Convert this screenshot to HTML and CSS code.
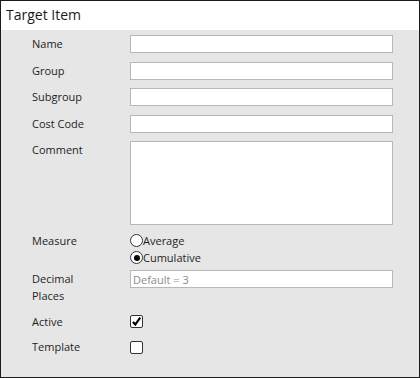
FILE: index.html
```html
<!DOCTYPE html>
<html lang="en">
<head>
  <meta charset="UTF-8">
  <title>Target Item</title>
  <link rel="stylesheet" href="styles.css">
</head>
<body>
  <div class="window">
    <div class="title-bar">Target Item</div>

    <div class="form">
      <div class="row">
        <label for="name">Name</label>
        <input type="text" id="name">
      </div>
      <div class="row">
        <label for="group">Group</label>
        <input type="text" id="group">
      </div>
      <div class="row">
        <label for="subgroup">Subgroup</label>
        <input type="text" id="subgroup">
      </div>
      <div class="row">
        <label for="costCode">Cost Code</label>
        <input type="text" id="costCode">
      </div>
      <div class="row">
        <label for="comment">Comment</label>
        <textarea id="comment"></textarea>
      </div>
      <div class="row row-measure">
        <label>Measure</label>
        <div class="radio-group">
          <label class="radio"><input type="radio" name="measure" value="average">Average</label>
          <label class="radio"><input type="radio" name="measure" value="cumulative" checked>Cumulative</label>
        </div>
      </div>
      <div class="row row-decimal">
        <label for="decimals">Decimal<br>Places</label>
        <input type="text" id="decimals" placeholder="Default = 3">
      </div>
      <div class="row">
        <label>Active</label>
        <span class="check checked">
          <svg width="11" height="11" viewBox="0 0 11 11"><path d="M2 6 L4.3 8.6 L9.2 1.6" fill="none" stroke="#000" stroke-width="2.2"/></svg>
        </span>
      </div>
      <div class="row">
        <label>Template</label>
        <span class="check"></span>
      </div>
    </div>
  </div>
</body>
</html>
```

FILE: styles.css
```css
* {
  box-sizing: border-box;
  margin: 0;
  padding: 0;
}

body {
  font-family: "Open Sans", "Noto Sans", sans-serif;
  color: #1e1e1e;
  background: #e6e6e6;
}

.window {
  width: 420px;
  height: 378px;
  border: 1px solid #1b1b1b;
  background-color: #e6e6e6;
}

.title-bar {
  height: 29px;
  line-height: 28px;
  padding-left: 5px;
  font-size: 14px;
  background: white;
  color: #1a1a1a;
}

.form {
  display: flex;
  flex-direction: column;
  gap: 8.5px;
  padding: 5px 0 0 31px;
  font-size: 11px;
}

.row {
  display: grid;
  grid-template-columns: 98px 263px;
  align-items: start;
}

.row > label {
  line-height: 17px;
}

input[type="text"],
textarea {
  height: 18px;
  border: 1px solid #b7b7b7;
  background: white;
  font-family: inherit;
  font-size: 11px;
  padding: 0 2px;
  color: #1e1e1e;
  outline: none;
}

input::placeholder {
  color: #8c8c8c;
}

textarea {
  height: 84px;
  resize: none;
}

.row-measure {
  margin-top: -1.5px;
}

.row-decimal {
  margin-top: -4.5px;
}

.radio-group {
  display: flex;
  flex-direction: column;
}

.radio {
  display: flex;
  align-items: center;
  height: 17px;
}

.radio input {
  appearance: none;
  width: 13px;
  height: 13px;
  border: 1px solid #333;
  border-radius: 50%;
  background: white;
  display: grid;
  place-items: center;
}

.radio input:checked::after {
  content: "";
  width: 6px;
  height: 6px;
  border-radius: 50%;
  background: #000;
}

.check {
  width: 13px;
  height: 13px;
  margin-top: 2.5px;
  border: 1px solid #333;
  border-radius: 2px;
  background: white;
  display: flex;
  align-items: center;
  justify-content: center;
}
```
